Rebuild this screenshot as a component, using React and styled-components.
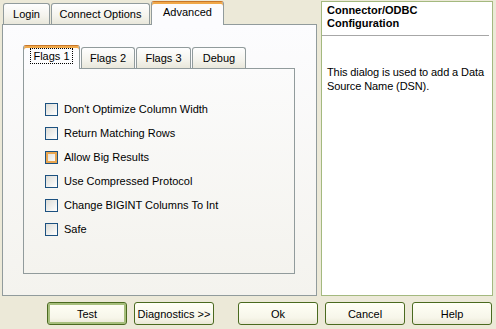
import React, { useState } from "react";
import styled, { createGlobalStyle } from "styled-components";

const Global = createGlobalStyle`
  body {
    margin: 0;
    background: #ece9d8;
    font-family: "Liberation Sans", Arial, sans-serif;
    font-size: 11px;
    color: #000;
  }
`;

const Window = styled.div`
  width: 496px;
  height: 329px;
  display: flex;
  flex-direction: column;
  background: #ece9d8;
`;

const TopRow = styled.div`
  display: flex;
  padding: 1px 0 0 2px;
  height: 295px;
`;

const LeftCol = styled.div`
  width: 315px;
  display: flex;
  flex-direction: column;
`;

const TabStrip = styled.div`
  display: flex;
  align-items: flex-end;
  gap: 1px;
  height: 23px;
  padding-left: ${p => p.$inset || 0}px;
`;

const Tab = styled.div`
  box-sizing: border-box;
  width: ${p => p.$w}px;
  height: ${p => (p.$active ? 24 : 21)}px;
  margin-bottom: ${p => (p.$active ? -1 : 0)}px;
  position: relative;
  z-index: ${p => (p.$active ? 2 : 1)};
  display: flex;
  align-items: center;
  justify-content: center;
  padding-bottom: ${p => (p.$active ? 3 : 0)}px;
  border: 1px solid #919b9c;
  border-bottom: none;
  border-radius: 3px 3px 0 0;
  background: ${p =>
    p.$active ? "#fcfcfe" : "linear-gradient(#fefefe, #f4f3ec 60%, #e9e7db)"};
  ${p =>
    p.$active &&
    `border-top: 1px solid #c8772a; box-shadow: inset 0 2px 0 #f0a849;`}
  white-space: nowrap;
  cursor: default;
`;

const Focus = styled.span`
  outline: 1px dotted #000;
  outline-offset: 1px;
  padding: 0 1px;
`;

const Panel = styled.div`
  box-sizing: border-box;
  flex: 1;
  border: 1px solid #919b9c;
  background: linear-gradient(#fcfcfe, #f4f3ee);
  padding: ${p => p.$pad || "0"};
  display: flex;
  flex-direction: column;
`;

const InnerPanel = styled.div`
  box-sizing: border-box;
  flex: 1;
  border: 1px solid #919b9c;
  background: linear-gradient(#fbfbfb, #f4f3ee);
  padding: 34px 0 0 21px;
  display: flex;
  flex-direction: column;
  gap: 11px;
`;

const Row = styled.label`
  display: flex;
  align-items: center;
  height: 13px;
  line-height: 13px;
  gap: 6px;
`;

const Box = styled.span`
  box-sizing: border-box;
  width: 13px;
  height: 13px;
  border: 1px solid #1c5180;
  background: linear-gradient(135deg, #dcdcd7, #ffffff);
  box-shadow: ${p => (p.$hot ? "inset 0 0 0 2px #e9a54e" : "none")};
`;

const InfoPanel = styled.div`
  box-sizing: border-box;
  margin-left: 4px;
  width: 172px;
  height: 295px;
  border: 1px solid #a4b97f;
  background: #fff;
  display: flex;
  flex-direction: column;
`;

const Title = styled.div`
  font-weight: bold;
  line-height: 13px;
  padding: 2px 5px 0 5px;
`;

const Rule = styled.div`
  height: 1px;
  background: #a7a7a7;
  margin: 5px 3px 0 0;
`;

const Desc = styled.p`
  margin: 29px 0 0;
  padding: 0 0 0 5px;
  line-height: 14px;
  letter-spacing: -0.1px;
`;

const ButtonRow = styled.div`
  display: flex;
  gap: 7px;
  margin-top: 6px;
  padding-left: 47px;
`;

const Button = styled.button`
  box-sizing: border-box;
  width: 80px;
  height: 23px;
  margin-left: ${p => p.$gap || 0}px;
  border: 1px solid #4a6a1f;
  border-radius: 3px;
  background: linear-gradient(#fffff6, #f7f6ea 70%, #e9e7d6);
  box-shadow: ${p => (p.$default ? "inset 0 0 0 2px #a6be7c" : "none")};
  font-family: "Liberation Sans", Arial, sans-serif;
  font-size: 11px;
  color: #000;
  padding: 0;
`;

const options = [
  "Don't Optimize Column Width",
  "Return Matching Rows",
  "Allow Big Results",
  "Use Compressed Protocol",
  "Change BIGINT Columns To Int",
  "Safe",
];

const outerTabs = [
  { label: "Login", w: 47 },
  { label: "Connect Options", w: 99 },
  { label: "Advanced", w: 73 },
];

const innerTabs = [
  { label: "Flags 1", w: 57 },
  { label: "Flags 2", w: 54 },
  { label: "Flags 3", w: 55 },
  { label: "Debug", w: 54 },
];

export default function App() {
  const [outer, setOuter] = useState("Advanced");
  const [inner, setInner] = useState("Flags 1");

  return (
    <Window>
      <Global />
      <TopRow>
        <LeftCol>
          <TabStrip $inset={1}>
            {outerTabs.map(t => (
              <Tab
                key={t.label}
                $w={t.w}
                $active={outer === t.label}
                onClick={() => setOuter(t.label)}
              >
                {t.label}
              </Tab>
            ))}
          </TabStrip>
          <Panel $pad="20px 21px 21px 20px">
            <TabStrip>
              {innerTabs.map(t => (
                <Tab
                  key={t.label}
                  $w={t.w}
                  $active={inner === t.label}
                  onClick={() => setInner(t.label)}
                >
                  {inner === t.label ? <Focus>{t.label}</Focus> : t.label}
                </Tab>
              ))}
            </TabStrip>
            <InnerPanel>
              {options.map((o, i) => (
                <Row key={o}>
                  <Box $hot={i === 2} />
                  {o}
                </Row>
              ))}
            </InnerPanel>
          </Panel>
        </LeftCol>
        <InfoPanel>
          <Title>
            Connector/ODBC
            <br />
            Configuration
          </Title>
          <Rule />
          <Desc>This dialog is used to add a Data Source Name (DSN).</Desc>
        </InfoPanel>
      </TopRow>
      <ButtonRow>
        <Button $default>Test</Button>
        <Button>Diagnostics &gt;&gt;</Button>
        <Button $gap={17}>Ok</Button>
        <Button>Cancel</Button>
        <Button>Help</Button>
      </ButtonRow>
    </Window>
  );
}
